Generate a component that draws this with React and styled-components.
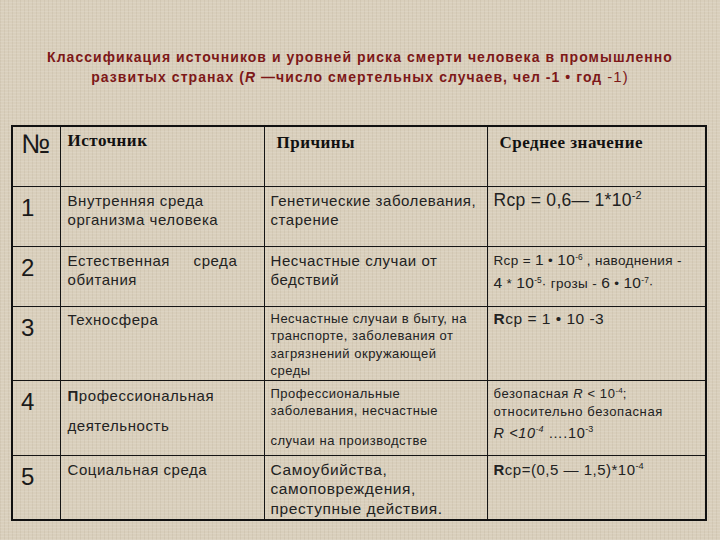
import React from "react";
import styled, { createGlobalStyle } from "styled-components";

const Global = createGlobalStyle`
  html, body {
    margin: 0;
    padding: 0;
  }
  body {
    width: 720px;
    height: 540px;
    overflow: hidden;
    background-color: #d9cfbc;
    background-image:
      repeating-linear-gradient(0deg, rgba(255,255,255,0.10) 0 1px, transparent 1px 3px),
      repeating-linear-gradient(90deg, rgba(120,100,70,0.08) 0 1px, transparent 1px 4px);
    font-family: "Liberation Sans", Arial, sans-serif;
  }
`;

const Slide = styled.div`
  width: 720px;
  height: 540px;
  box-sizing: border-box;
  padding-top: 48px;
  display: flex;
  flex-direction: column;
  align-items: center;
`;

const Title = styled.h1`
  margin: 0;
  width: 700px;
  text-align: center;
  font-size: 14px;
  line-height: 19px;
  font-weight: bold;
  color: #7d1818;
  letter-spacing: 1.05px;
`;

const Thin = styled.span`
  font-weight: normal;
  font-size: 15px;
`;

const Table = styled.table`
  margin-top: 38px;
  margin-left: -2px;
  width: 696px;
  border-collapse: collapse;
  table-layout: fixed;
  border: 2px solid #111;
  color: #222;
`;

const Row = styled.tr`
  height: ${(p) => p.h}px;
`;

const Cell = styled.td`
  border: 1.5px solid #151515;
  vertical-align: top;
  padding: ${(p) => p.pad || "4px 4px 0 7px"};
  font-size: ${(p) => p.size || 15}px;
  line-height: ${(p) => p.lh || 19}px;
  letter-spacing: ${(p) => (p.ls === undefined ? 0.55 : p.ls)}px;
  white-space: nowrap;
`;

const Num = styled(Cell)`
  font-size: 24px;
  line-height: 26px;
  padding: 8px 0 0 8px;
  letter-spacing: 0;
  color: #1a1a1a;
`;

const Head = styled(Cell)`
  font-family: "Liberation Serif", "Times New Roman", serif;
  font-weight: bold;
  font-size: 17px;
  letter-spacing: 0.5px;
  color: #111;
`;

const Sup = styled.sup`
  font-size: 0.62em;
  line-height: 0;
  vertical-align: 0.65em;
  letter-spacing: 0;
`;

const Gap = styled.div`
  height: ${(p) => p.h}px;
`;

const Big = styled.span`
  font-size: ${(p) => p.size}px;
`;

const Ital = styled.i`
  font-style: italic;
`;

const B = styled.b`
  font-weight: bold;
`;

export default function App() {
  return (
    <>
      <Global />
      <Slide>
        <Title>
          Классификация источников и уровней риска смерти человека в промышленно
          <br />
          развитых странах (<Ital>R</Ital> —число смертельных случаев, чел -1 • год{" "}
          <Thin>-1)</Thin>
        </Title>
        <Table>
          <colgroup>
            <col style={{ width: 48 }} />
            <col style={{ width: 204 }} />
            <col style={{ width: 223 }} />
            <col />
          </colgroup>
          <tbody>
            <Row h={60}>
              <Num style={{ fontSize: 27, paddingTop: 4 }}>№</Num>
              <Head pad="4px 4px 0 7px">Источник</Head>
              <Head pad="6px 4px 0 12px">Причины</Head>
              <Head pad="6px 4px 0 12px">Среднее значение</Head>
            </Row>
            <Row h={60}>
              <Num>1</Num>
              <Cell>Внутренняя среда<br />организма человека</Cell>
              <Cell pad="4px 4px 0 6px">Генетические заболевания,<br />старение</Cell>
              <Cell pad="2px 4px 0 6px" size={17.5} lh={22} ls={0.3}>
                Rcp = 0,6— 1*10<Sup>-2</Sup>
              </Cell>
            </Row>
            <Row h={60}>
              <Num>2</Num>
              <Cell>Естественная&nbsp;&nbsp;&nbsp;&nbsp;&nbsp;среда<br />обитания</Cell>
              <Cell pad="4px 4px 0 6px">Несчастные случаи от<br />бедствий</Cell>
              <Cell pad="2px 4px 0 6px" size={13.5} lh={22} ls={0.35}>
                Rcp = <Big size={15.5}>1</Big> • <Big size={15.5}>10</Big><Sup>-6</Sup> , наводнения -
                <br />
                <Big size={15.5}>4</Big> * <Big size={15.5}>10</Big><Sup>-5</Sup>· грозы - <Big size={15.5}>6</Big> • <Big size={15.5}>10</Big><Sup>-7</Sup>·
              </Cell>
            </Row>
            <Row h={73}>
              <Num>3</Num>
              <Cell pad="3px 4px 0 7px">Техносфера</Cell>
              <Cell pad="3px 4px 0 6px" size={13} lh={17.5} ls={0.5}>
                Несчастные случаи в быту, на<br />
                транспорте, заболевания от<br />
                загрязнений окружающей<br />
                среды
              </Cell>
              <Cell pad="2px 4px 0 6px" size={15.5} ls={0.5}>
                <B>R</B>cp = 1 • 10 -3
              </Cell>
            </Row>
            <Row h={75}>
              <Num>4</Num>
              <Cell pad="0 4px 0 7px" lh={30}>
                <B>П</B>рофессиональная<br />деятельность
              </Cell>
              <Cell pad="4px 4px 0 6px" size={13} lh={17.5} ls={0.5}>
                Профессиональные<br />заболевания, несчастные
                <Gap h={12} />
                случаи на производстве
              </Cell>
              <Cell pad="4px 4px 0 6px" size={13} lh={18} ls={0.6}>
                безопасная <Ital>R</Ital> &lt; 10<Sup>-4</Sup>;<br />
                относительно безопасная<br />
                <Big size={14.5} style={{ lineHeight: "24px" }}>
                  <Ital>R &lt;10<Sup>-4</Sup></Ital> ….10<Sup>-3</Sup>
                </Big>
              </Cell>
            </Row>
            <Row h={65}>
              <Num>5</Num>
              <Cell pad="4px 4px 0 7px">Социальная среда</Cell>
              <Cell pad="4px 4px 0 6px" size={15.5} lh={19.5} ls={0.6}>
                Самоубийства,<br />самоповреждения,<br />преступные действия.
              </Cell>
              <Cell pad="4px 4px 0 6px" size={15} ls={0.5}>
                <B>R</B>cp=(0,5 — 1,5)*10<Sup>-4</Sup>
              </Cell>
            </Row>
          </tbody>
        </Table>
      </Slide>
    </>
  );
}
